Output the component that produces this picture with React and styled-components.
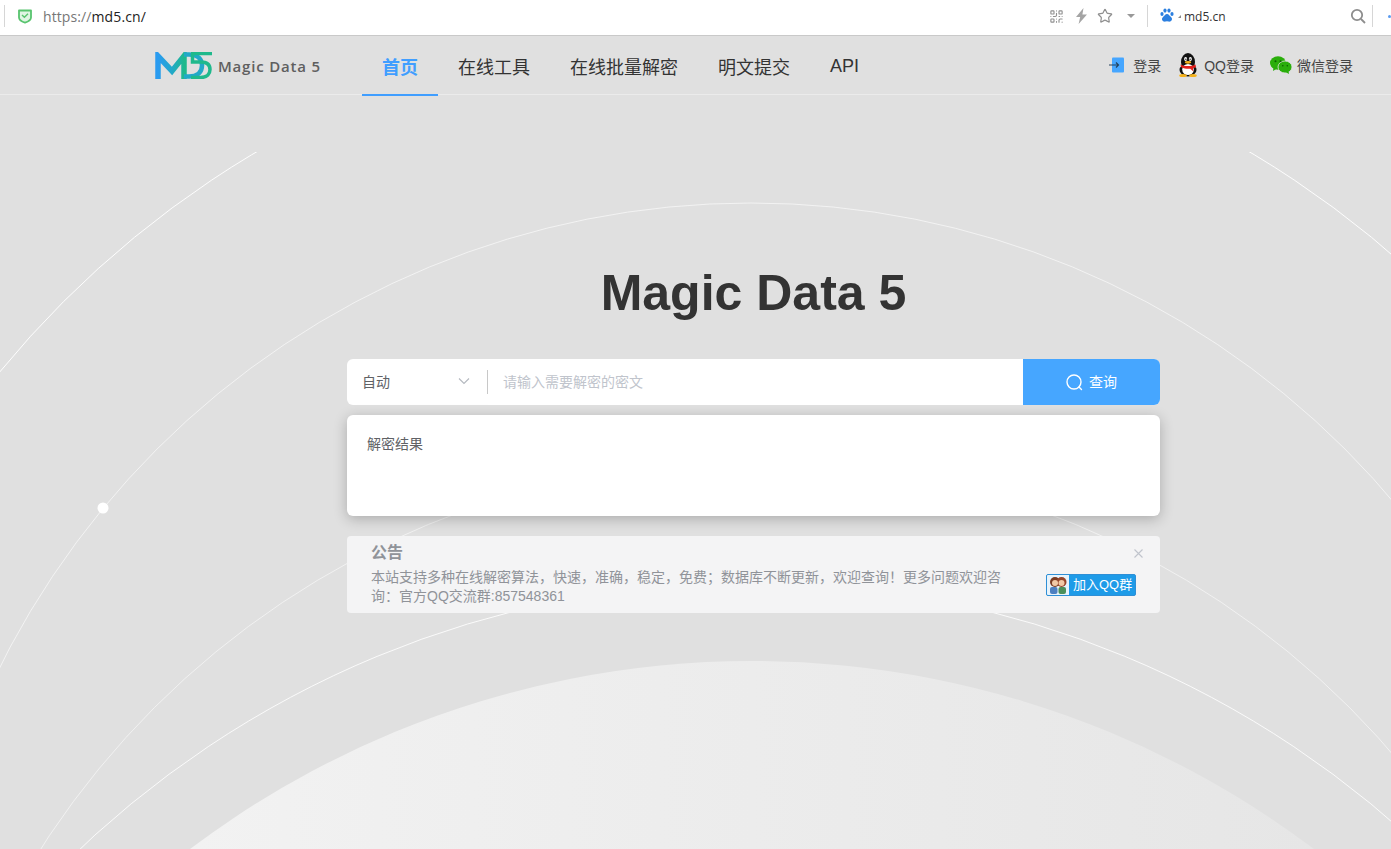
import React from "react"
import styled, { createGlobalStyle } from "styled-components"
import { QrCode, Star } from "lucide-react"

const sans = `"Open Sans", "Noto Sans CJK SC", sans-serif`
const arial = `"Liberation Sans", "Noto Sans CJK SC", sans-serif`

const GlobalStyle = createGlobalStyle`
  html, body {
    margin: 0;
    padding: 0;
    background: #e0e0e0;
  }
  * {
    box-sizing: border-box;
  }
`

const Page = styled.div`
  position: relative;
  width: 1391px;
  height: 849px;
  overflow: hidden;
  background: #e0e0e0;
  font-family: ${arial};
`

const BackgroundArt = styled.svg`
  position: absolute;
  left: 0;
  top: 152px;
  width: 1391px;
  height: 697px;
`

const BrowserBar = styled.div`
  position: relative;
  display: flex;
  align-items: center;
  height: 36px;
  padding: 0 0 3px 4px;
  background: #fff;
  border-bottom: 1px solid #c9c9c9;
  font-family: ${sans};
`

const BarDivider = styled.span`
  width: 1px;
  height: 22px;
  background: #d6d6d6;
  margin: ${(p) => p.$margin || "0"};
`

const Url = styled.div`
  margin-left: 10px;
  font-size: 14px;
  color: #777;
  letter-spacing: 0.1px;

  b {
    font-weight: 400;
    color: #222;
  }
`

const BarTools = styled.div`
  display: flex;
  align-items: center;
  margin-left: auto;
  color: #8f8f8f;
`

const ToolSlot = styled.span`
  display: flex;
  margin-left: ${(p) => p.$gap || 0}px;
`

const Caret = styled.span`
  width: 0;
  height: 0;
  margin-left: 14px;
  border-left: 4px solid transparent;
  border-right: 4px solid transparent;
  border-top: 4px solid #999;
`

const CornerMark = styled.span`
  align-self: flex-end;
  width: 0;
  height: 0;
  margin: 0 0 9px 4px;
  border-left: 3px solid transparent;
  border-bottom: 3px solid #888;
`

const EngineName = styled.span`
  margin-left: 3px;
  width: 166px;
  font-size: 12px;
  color: #333;
`

const BlueDot = styled.span`
  width: 3px;
  height: 3px;
  border-radius: 50%;
  background: #5b9bf0;
  margin-left: 15px;
`

const Header = styled.header`
  position: relative;
  display: flex;
  align-items: stretch;
  height: 59px;
  padding-left: 155px;
  border-bottom: 1px solid #ebebeb;
`

const Brand = styled.div`
  display: flex;
  align-items: center;
  width: 207px;
`

const BrandName = styled.span`
  margin: 1px 0 0 6px;
  font-family: ${sans};
  font-size: 15px;
  font-weight: 600;
  letter-spacing: 0.8px;
  color: #5f5f5f;
`

const Nav = styled.nav`
  display: flex;
`

const NavItem = styled.a`
  display: flex;
  align-items: center;
  height: 60px;
  padding: 2px 20px 0;
  font-size: 18px;
  font-weight: ${(p) => (p.$active ? 700 : 400)};
  color: ${(p) => (p.$active ? "#409eff" : "#333")};
  border-bottom: 2px solid ${(p) => (p.$active ? "#409eff" : "transparent")};
`

const UserLinks = styled.div`
  display: flex;
  align-items: center;
  margin-left: auto;
  padding-right: 38px;
`

const UserLink = styled.a`
  display: flex;
  align-items: center;
  gap: ${(p) => p.$gap}px;
  margin-left: ${(p) => p.$left || 0}px;
  font-size: 14px;
  color: #444;
`

const Main = styled.main`
  position: relative;
  width: 813px;
  margin-left: 347px;
  padding-top: 168px;
`

const Title = styled.h1`
  margin: 0 0 36px;
  font-size: 50px;
  line-height: 60px;
  font-weight: 700;
  text-align: center;
  color: #333;
`

const SearchBar = styled.div`
  display: flex;
  align-items: center;
  height: 46px;
  background: #fff;
  border-radius: 6px;
  overflow: hidden;
`

const Mode = styled.div`
  display: flex;
  align-items: center;
  justify-content: space-between;
  width: 141px;
  height: 24px;
  padding: 0 17px 2px 15px;
  border-right: 1px solid #c8c8c8;
  font-size: 14px;
  color: #606266;
`

const SearchInput = styled.input`
  flex: 1;
  height: 100%;
  padding: 0 15px 1px;
  border: 0;
  outline: 0;
  font-family: ${arial};
  font-size: 14px;
  color: #606266;

  &::placeholder {
    color: #c0c4cc;
    opacity: 1;
  }
`

const SearchButton = styled.button`
  display: flex;
  align-items: center;
  justify-content: center;
  gap: 6px;
  width: 137px;
  height: 100%;
  padding: 0 0 2px;
  border: 0;
  background: #46a6ff;
  color: #fff;
  font-family: ${arial};
  font-size: 14px;

  svg {
    margin-top: 2px;
  }
`

const ResultCard = styled.section`
  height: 101px;
  margin-top: 10px;
  padding: 19px 20px;
  background: #fff;
  border-radius: 6px;
  box-shadow: 0 3px 14px rgba(0, 0, 0, 0.24);
  font-size: 14px;
  line-height: 20px;
  color: #606266;
`

const Notice = styled.section`
  position: relative;
  display: flex;
  align-items: flex-start;
  height: 77px;
  margin-top: 20px;
  padding: 6px 24px 0;
  background: #f4f4f5;
  border-radius: 4px;
  color: #909399;
`

const NoticeBody = styled.div`
  width: 640px;
`

const NoticeTitle = styled.div`
  font-size: 16px;
  line-height: 21px;
  font-weight: 700;
`

const NoticeText = styled.p`
  margin: 5px 0 0;
  font-size: 14px;
  line-height: 19px;
`

const CloseMark = styled.svg`
  position: absolute;
  top: 13px;
  right: 17px;
`

const GroupButton = styled.a`
  display: flex;
  align-items: stretch;
  height: 22px;
  width: 90px;
  margin: 32px 0 0 35px;
  border: 1px solid #2f8fd6;
  border-radius: 2px;
  background: #1e9be8;
  color: #fff;
  font-size: 13px;
  line-height: 20px;
  overflow: hidden;
`

const GroupAvatar = styled.span`
  display: flex;
  align-items: center;
  justify-content: center;
  width: 22px;
  background: #e8f3fb;
`

const GroupLabel = styled.span`
  padding-left: 4px;
  white-space: nowrap;
`

const Shield = () => (
  <svg width="16" height="16" viewBox="0 0 16 16" fill="none" style={{ marginLeft: 12 }}>
    <path d="M2 2.5h12v7c0 2.6-3.6 4.4-6 5.2-2.4-.8-6-2.6-6-5.2z" fill="#dff5e3" stroke="#58c46e" strokeWidth="1.8" strokeLinejoin="round" />
    <path d="M5 7l2.4 2.3L11 5.8" stroke="#58c46e" strokeWidth="1.4" />
  </svg>
)

const Bolt = () => (
  <svg width="13" height="16" viewBox="0 0 13 16">
    <path d="M8.5 0 1 9h4.2L3.6 16 12 6.5H7.4z" fill="#a4a4a4" />
  </svg>
)

const BaiduPaw = () => (
  <svg width="14" height="16" viewBox="0 0 14 16" fill="#2b7fe0">
    <ellipse cx="2" cy="6" rx="1.6" ry="2" />
    <ellipse cx="5" cy="2.6" rx="1.6" ry="2.1" />
    <ellipse cx="9" cy="2.6" rx="1.6" ry="2.1" />
    <ellipse cx="12" cy="6" rx="1.6" ry="2" />
    <path d="M7 6c2 0 2.5 2 4 3 2 1.6.8 5-2 4.6-1-.1-1.4-.4-2-.4s-1 .3-2 .4c-2.8.4-4-3-2-4.6 1.5-1 2-3 4-3z" />
  </svg>
)

const TinySearch = () => (
  <svg width="16" height="16" viewBox="0 0 16 16" fill="none" stroke="#8d8d8d" strokeWidth="1.8">
    <circle cx="7" cy="7" r="5.2" />
    <path d="M11 11l4 4" />
  </svg>
)

const LogoMark = () => (
  <svg width="57" height="27" viewBox="0 0 57 27" fill="none">
    <defs>
      <linearGradient id="mdGrad" x1="0" y1="0" x2="1" y2="0">
        <stop offset="0" stopColor="#2a9bf0" />
        <stop offset="0.55" stopColor="#22a9c8" />
        <stop offset="1" stopColor="#1fb98c" />
      </linearGradient>
    </defs>
    <path d="M3 27V4l14 15L29 4v23" stroke="url(#mdGrad)" strokeWidth="5.5" />
    <path d="M29 2.5h5c9 0 13 5 13 11s-4 11-13 11h-5" stroke="#22a9c8" strokeWidth="4.5" />
    <path d="M36 1.5h21M37.5 1.500v8.500h8c7 0 9.500 3.500 9.500 7.500s-2.500 8-9.500 8H36" stroke="#1fb98c" strokeWidth="3.5" />
  </svg>
)

const LoginIcon = () => (
  <svg width="15" height="16" viewBox="0 0 15 16" fill="none">
    <rect x="3" y="0.5" width="12" height="15" rx="1" fill="#46a6ff" />
    <path d="M0 8h9.5M7 5.500 9.500 8 7 10.500" stroke="#24435f" strokeWidth="1.2" />
  </svg>
)

const Penguin = () => (
  <svg width="20" height="24" viewBox="0 0 20 24">
    <ellipse cx="10" cy="9" rx="7" ry="9" fill="#111" />
    <ellipse cx="10" cy="17" rx="8.5" ry="6.5" fill="#111" />
    <ellipse cx="10" cy="16.5" rx="5.8" ry="5.5" fill="#fff" />
    <ellipse cx="7.6" cy="6" rx="1.5" ry="2" fill="#fff" />
    <ellipse cx="12.4" cy="6" rx="1.5" ry="2" fill="#fff" />
    <circle cx="7.9" cy="6.3" r="0.7" fill="#111" />
    <circle cx="12.1" cy="6.3" r="0.7" fill="#111" />
    <ellipse cx="10" cy="9.3" rx="3.2" ry="1.4" fill="#f5b21c" />
    <path d="M2.500 11.500c4 2 11 2 15 0l.5 2.500c-1 .6-2 1-3 1.200l.2 3-3-2.500c-2.500.3-6 0-9-1.500z" fill="#e3211c" />
    <ellipse cx="5" cy="22.5" rx="3.8" ry="1.5" fill="#f5b21c" />
    <ellipse cx="15" cy="22.5" rx="3.8" ry="1.5" fill="#f5b21c" />
  </svg>
)

const WeChat = () => (
  <svg width="22" height="18" viewBox="0 0 22 18">
    <ellipse cx="8" cy="7" rx="8" ry="6.8" fill="#2aae0b" />
    <path d="M3.500 11 3 15l4-2.500z" fill="#2aae0b" />
    <ellipse cx="15" cy="11" rx="7" ry="6" fill="#2aae0b" stroke="#e0e0e0" strokeWidth="0.8" />
    <path d="M18.500 15l.5 3-3.500-2z" fill="#2aae0b" />
    <circle cx="5.5" cy="5.2" r="1" fill="#0c5f00" />
    <circle cx="10.5" cy="5.2" r="1" fill="#0c5f00" />
    <circle cx="12.8" cy="9.8" r="0.8" fill="#0c5f00" />
    <circle cx="17.3" cy="9.8" r="0.8" fill="#0c5f00" />
  </svg>
)

const Chevron = () => (
  <svg width="12" height="8" viewBox="0 0 12 8" fill="none" stroke="#b4b8bf" strokeWidth="1.1">
    <path d="M1 1.500 6 6.500 11 1.500" />
  </svg>
)

const SearchGlyph = () => (
  <svg width="17" height="17" viewBox="0 0 17 17" fill="none" stroke="#fff" strokeWidth="1.4">
    <circle cx="8" cy="8" r="7" />
    <path d="M13 13l2.500 2.500" strokeLinecap="round" />
  </svg>
)

const GroupPeople = () => (
  <svg width="20" height="20" viewBox="0 0 20 20">
    <circle cx="7" cy="7" r="5" fill="#7a3b22" />
    <circle cx="13.5" cy="7" r="5" fill="#96452a" />
    <circle cx="7" cy="8" r="3" fill="#f2c9a6" />
    <circle cx="13.5" cy="8" r="3" fill="#f2c9a6" />
    <rect x="2" y="12" width="7.5" height="7" rx="2" fill="#4d7fc0" />
    <rect x="10.5" y="12" width="7.5" height="7" rx="2" fill="#4b8f5a" />
  </svg>
)

const arcs = [
  { cx: 753, cy: 991, r: 975, opacity: 0.95 },
  { cx: 751, cy: 1043, r: 840, opacity: 0.6 },
  { cx: 752, cy: 1305, r: 845, opacity: 0.55 },
  { cx: 751, cy: 1559, r: 977, opacity: 0.85 },
]

const navItems = ["在线工具", "在线批量解密", "明文提交", "API"]

const App = () => {
  return (
    <Page>
      <GlobalStyle />
      <BackgroundArt viewBox="0 152 1391 697">
        <defs>
          <linearGradient id="globeFill" x1="0" y1="0" x2="1" y2="0">
            <stop offset="0.1" stopColor="#f4f4f4" />
            <stop offset="0.9" stopColor="#e4e4e4" />
          </linearGradient>
        </defs>
        {arcs.map((arc) => (
          <circle key={arc.cy} cx={arc.cx} cy={arc.cy} r={arc.r} fill="none" stroke="#fff" strokeWidth="1" opacity={arc.opacity} />
        ))}
        <circle cx="752" cy="1595" r="934" fill="url(#globeFill)" />
        <circle cx="103" cy="508" r="5.5" fill="#fff" />
      </BackgroundArt>

      <BrowserBar>
        <BarDivider />
        <Shield />
        <Url>
          https://<b>md5.cn/</b>
        </Url>
        <BarTools>
          <QrCode size={15} strokeWidth={1.8} />
          <ToolSlot $gap={11}>
            <Bolt />
          </ToolSlot>
          <ToolSlot $gap={9}>
            <Star size={16} strokeWidth={1.8} />
          </ToolSlot>
          <Caret />
          <BarDivider $margin="0 12px 0 12px" />
          <BaiduPaw />
          <CornerMark />
          <EngineName>md5.cn</EngineName>
          <TinySearch />
          <BarDivider $margin="0 0 0 6px" />
          <BlueDot />
        </BarTools>
      </BrowserBar>

      <Header>
        <Brand>
          <LogoMark />
          <BrandName>Magic Data 5</BrandName>
        </Brand>
        <Nav>
          <NavItem $active>首页</NavItem>
          {navItems.map((item) => (
            <NavItem key={item}>{item}</NavItem>
          ))}
        </Nav>
        <UserLinks>
          <UserLink $gap={9}>
            <LoginIcon />
            登录
          </UserLink>
          <UserLink $gap={6} $left={17}>
            <Penguin />
            QQ登录
          </UserLink>
          <UserLink $gap={5} $left={16}>
            <WeChat />
            微信登录
          </UserLink>
        </UserLinks>
      </Header>

      <Main>
        <Title>Magic Data 5</Title>
        <SearchBar>
          <Mode>
            自动
            <Chevron />
          </Mode>
          <SearchInput placeholder="请输入需要解密的密文" />
          <SearchButton>
            <SearchGlyph />
            查询
          </SearchButton>
        </SearchBar>
        <ResultCard>解密结果</ResultCard>
        <Notice>
          <NoticeBody>
            <NoticeTitle>公告</NoticeTitle>
            <NoticeText>
              本站支持多种在线解密算法，快速，准确，稳定，免费；数据库不断更新，欢迎查询！更多问题欢迎咨询：官方QQ交流群:857548361
            </NoticeText>
          </NoticeBody>
          <GroupButton>
            <GroupAvatar>
              <GroupPeople />
            </GroupAvatar>
            <GroupLabel>加入QQ群</GroupLabel>
          </GroupButton>
          <CloseMark width="9" height="9" viewBox="0 0 9 9" stroke="#c0c4cc" strokeWidth="1.1">
            <path d="M.5.500l8 8M8.500.500l-8 8" />
          </CloseMark>
        </Notice>
      </Main>
    </Page>
  )
}

export default App
